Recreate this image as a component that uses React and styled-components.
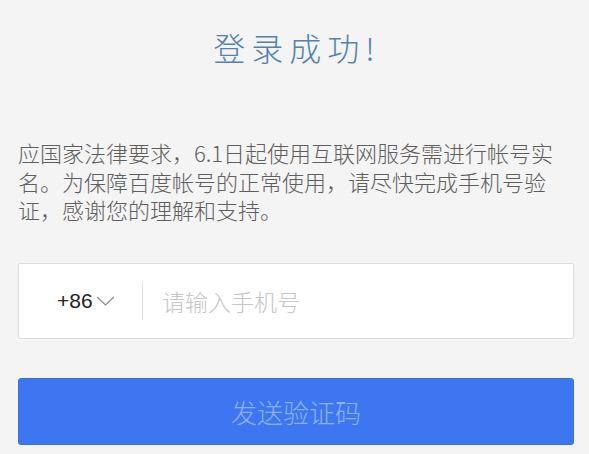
import React from "react";
//styling
import styled, { createGlobalStyle } from "styled-components";

const GlobalStyle = createGlobalStyle`
  html, body {
    margin: 0;
    padding: 0;
    background: #f4f4f5;
  }
  body {
    font-family: "Noto Sans CJK SC", "Noto Sans", sans-serif;
  }
`;

const App = () => {
  return (
    <>
      <GlobalStyle />
      <Page>
        <Title>登录成功!</Title>
        <Notice>
          应国家法律要求，6.1日起使用互联网服务需进行帐号实名。为保障百度帐号的正常使用，请尽快完成手机号验证，感谢您的理解和支持。
        </Notice>
        <PhoneField>
          <CountryCode>
            +86
            <svg width="19" height="10" viewBox="0 0 19 10">
              <path d="M1 1 L9.5 9 L18 1" fill="none" stroke="#8a8a8a" strokeWidth="1.2" />
            </svg>
          </CountryCode>
          <Divider />
          <PhoneInput type="tel" placeholder="请输入手机号" />
        </PhoneField>
        <SendButton>发送验证码</SendButton>
      </Page>
    </>
  );
};

const Page = styled.div`
  width: 589px;
  height: 454px;
  box-sizing: border-box;
  padding: 25px 15px 0 18px;
  overflow: hidden;
`;
const Title = styled.h1`
  margin: 0;
  text-align: center;
  font-size: 32px;
  line-height: 44px;
  font-weight: 300;
  letter-spacing: 6px;
  color: #5282ad;
  padding-left: 2px;
`;
const Notice = styled.p`
  margin: 69px 0 0 0;
  max-width: 548px;
  font-size: 22px;
  line-height: 28.5px;
  font-weight: 300;
  color: #5e5e5e;
`;
const PhoneField = styled.div`
  margin-top: 39px;
  height: 76px;
  box-sizing: border-box;
  display: flex;
  align-items: center;
  background: #ffffff;
  border: 1px solid #dedede;
  border-radius: 2px;
`;
const CountryCode = styled.div`
  display: flex;
  align-items: center;
  gap: 3px;
  padding-left: 38px;
  width: 123px;
  box-sizing: border-box;
  font-family: "Liberation Sans", Arial, sans-serif;
  font-size: 21px;
  color: #222222;
  svg {
    margin-top: 1px;
  }
`;
const Divider = styled.div`
  width: 1px;
  height: 38px;
  background: #e2e2e2;
`;
const PhoneInput = styled.input`
  flex: 1;
  margin-left: 17px;
  border: none;
  outline: none;
  background: transparent;
  font-family: "Noto Sans CJK SC", sans-serif;
  font-size: 23px;
  font-weight: 300;
  color: #333;
  &::placeholder {
    color: #c6c6c6;
  }
`;
const SendButton = styled.button`
  display: block;
  width: 100%;
  margin-top: 39px;
  height: 67px;
  border: 1px solid #3a6fdf;
  border-radius: 3px;
  background: #3e76f2;
  font-family: "Noto Sans CJK SC", sans-serif;
  font-size: 26px;
  font-weight: 300;
  color: #8db2f0;
`;
export default App;
